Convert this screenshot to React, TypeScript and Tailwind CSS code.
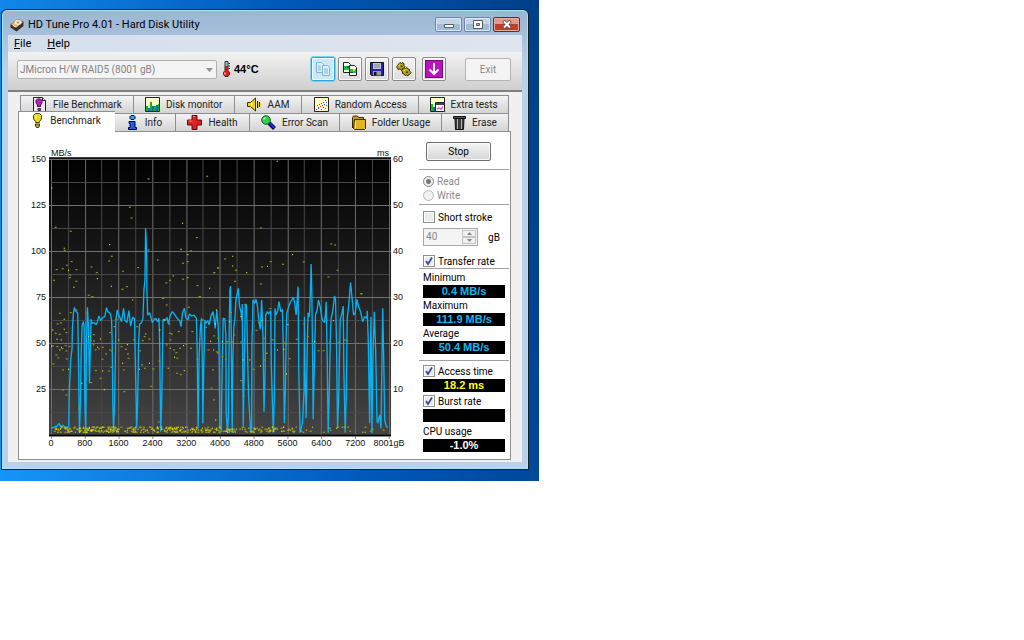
import { useId } from 'react';
import type { ReactNode } from 'react';

type Pt = [number, number];

const parse = (s: string): Pt[] => s.trim().split(/\s+/).map((p) => p.split(',').map(Number) as Pt);

const traceStart =
  '93,415 105,410 112,408 117,400 122,410 128,406 135,412 143,412 146,410 148,300 152,210 156,175 157,115 160,70 163,52 166,62 170,66 173,70 175,200 178,428 181,345 183,200 186,105 190,95 192,110 194,330 197,428 199,160 202,52 205,110 208,280 211,160 213,88 216,100 222,98 228,104 232,95 236,78 242,92 248,82 254,80 259,53 263,65 270,70 274,88 276,150 278,345 280,425 283,345 286,180 287,90 291,60 294,72 298,80 304,95 310,55 314,90 320,98 326,62 331,108 337,82 343,85 344,160 348,345 349,415 352,345 355,160 358,102 364,98 368,85 371,0 374,-30 376,-185 379,-120 380,0 382,75 388,68 396,98 400,90 406,85 412,95 416,85 418,160 421,425 424,345 427,160 428,88 434,92 440,82 444,102 450,75 456,65 464,75 470,85 478,92 482,110 486,70 492,55 496,82 502,90 507,72 514,78 520,75 528,85 530,175 533,415 536,200 540,110 543,85 546,240 547,400 550,230 553,90 556,100 562,92 566,105 572,75 578,65 584,115 589,60 593,110 596,200 598,415';
const traceEnd =
  '28,425 32,425 35,230 38,85 43,86 46,140 47,370 51,428 54,370 56,120 58,0 60,-12 62,120 64,360 65,428 67,200 70,110 73,85 76,30 79,15 83,-5 87,50 91,65 94,90 95,42 98,408 101,230 104,42 108,45 111,200 114,320 118,390 120,425 123,410 124,160 126,90 127,30 132,40 136,28 140,45 145,95 149,118 153,30 157,140 160,365 163,270 165,75 170,65 174,72 180,62 182,230 188,428 191,320 193,55 196,75 201,62 205,35 210,65 215,58 218,180 221,400 224,300 226,160 228,70 234,50 240,35 248,22 252,40 256,75 260,20 262,-10 264,240 268,428 275,400 280,300 281,80 283,250 286,385 290,140 292,68 296,80 299,0 301,-78 303,0 306,250 307,388 311,210 314,75 319,60 323,30 328,50 334,88 341,98 344,70 346,35 349,200 352,428 355,320 359,120 361,85 366,60 371,18 374,30 377,160 380,415 384,300 388,90 393,70 397,48 399,250 403,428 406,320 409,85 413,50 417,0 419,-22 422,10 428,75 433,70 438,28 443,50 449,65 455,95 461,80 468,85 469,62 472,160 476,400 480,80 483,430 486,200 490,65 494,180 498,390 500,400 506,375 510,415 513,200 515,55 518,200 521,390 526,410 531,412';

const dotsUpperLeft = parse(
  '96,144 106,262 151,274 133,325 133,331 154,365 141,376 109,389 127,386 146,391 168,389 150,405 150,413 101,421 168,424 162,442 213,381 229,398 232,416 205,466 216,470 269,314 274,349 266,363 309,394 319,440 306,448 274,439 328,202 333,234 354,383 384,117 384,330 413,360 437,429 448,421 459,408 427,475 481,328 487,250 528,293 511,333 503,344 501,365 487,370 503,413 487,418 530,437 568,445 537,470 580,398 592,384 559,109',
);
const dotsUpperRight = parse(
  '200,64 150,264 43,357 67,349 22,384 10,398 67,378 75,391 72,424 109,398 150,432 153,381 171,379 179,365 216,373 246,344 278,366 360,312 373,315 352,411 379,391 451,461',
);
const dotsLowerLeft = parse(
  '120,70 151,68 168,60 133,88 112,102 122,99 99,120 106,130 118,133 133,118 138,128 110,148 124,150 98,168 111,170 125,172 136,167 147,170 120,180 108,195 138,183 95,169 126,176 114,204 141,207 99,222 128,240 146,238 128,300 138,315 186,280 212,278 240,265 253,299 176,355 200,70 206,140 211,152 220,134 222,153 219,165 225,180 233,172 247,172 235,177 241,147 246,208 226,242 248,243 266,243 272,232 258,192 269,180 274,183 270,128 282,110 288,88 296,150 303,170 316,178 322,164 322,192 324,205 308,220 310,240 311,305 338,30 340,150 350,110 360,183 366,152 372,140 377,132 386,147 364,225 358,238 373,235 398,237 388,220 391,289 416,213 419,120 428,25 438,45 433,90 446,102 448,130 455,132 449,150 438,165 450,175 460,180 467,188 463,202 470,205 478,175 490,167 496,162 474,125 444,235 469,250 480,254 492,242 504,52 515,125 512,175 537,20 530,208 548,90 556,112 563,180 571,154 576,75 580,138 585,102 592,145 414,396 588,60',
);
const dotsLowerRight = parse(
  '10,180 18,186 22,190 36,155 35,200 45,208 8,240 10,330 2,294 16,390 50,155 60,68 58,95 63,155 70,135 92,80 104,44 91,156 98,210 91,272 98,318 118,210 128,238 145,98 154,92 154,106 137,121 150,228 160,145 160,210 169,190 178,56 185,150 201,180 214,65 221,160 220,178 236,206 225,162 232,104 257,148 290,140 312,155 322,182 337,182 368,92 357,156 384,157 403,150 408,152 451,12 228,252 280,102',
);

function idleBand(): Pt[] {
  const out: Pt[] = [];
  let seed = 20114;
  const next = () => {
    seed = (seed * 16807) % 2147483647;
    return seed / 2147483647;
  };
  for (let i = 0; i < 300; i++) out.push([next() * 535, 803 + Math.floor(next() * 6) * 3]);
  for (let i = 0; i < 70; i++) out.push([535 + next() * 200, 803 + Math.floor(next() * 6) * 3]);
  for (let i = 0; i < 20; i++) out.push([735 + next() * 260, 803 + Math.floor(next() * 6) * 3]);
  return out;
}
const band = idleBand();

function Dots({ pts }: { pts: Pt[] }) {
  return (
    <>
      {pts.map(([x, y], i) => (
        <rect key={i} x={x - 2} y={y - 2} width={i % 3 ? 6 : 3} height={3.6} fill={i % 3 ? '#93931c' : '#f0f018'} />
      ))}
    </>
  );
}

function Plot() {
  return (
    <svg viewBox="0 0 1011 828" preserveAspectRatio="none" className="block h-[276px] w-full overflow-visible" role="img" aria-label="Transfer rate and access time">
      <defs>
        <linearGradient id="plotbg" x1="0" y1="0" x2="0" y2="1">
          <stop offset="0" stopColor="#000" />
          <stop offset="1" stopColor="#444" />
        </linearGradient>
      </defs>
      <rect x="-6" y="-5" width="1023" height="837" fill="url(#plotbg)" />
      <rect x="-6" y="-5" width="1023" height="3" fill="#333" />
      {Array.from({ length: 21 }, (_, i) => (
        <rect key={i} x={Math.round(i * 16.83) * 3} y="0" width="3" height="828" fill={i % 2 ? '#474747' : '#6c6c6c'} />
      ))}
      {Array.from({ length: 13 }, (_, i) => (
        <rect key={i} x={i % 2 ? 0 : -6} y={i * 69} width={i % 2 ? 1011 : 1023} height="3" fill={i % 2 ? '#474747' : '#707070'} />
      ))}
      <rect x="-6" y="827" width="1023" height="4" fill="#000" />
      <rect x="-6" y="831" width="1023" height="3" fill="#888" />
      {Array.from({ length: 11 }, (_, i) => (
        <rect key={i} x={i * 101} y="831" width="3" height="8" fill="#777" />
      ))}
      <g fill="none" stroke="#06b2f4" strokeWidth="4" strokeLinejoin="bevel">
        <polyline points={traceStart} transform="translate(-93 393)" />
        <polyline points={traceEnd} transform="translate(477 393)" />
      </g>
      <g transform="translate(-93 -57)"><Dots pts={dotsUpperLeft} /></g>
      <g transform="translate(477 -57)"><Dots pts={dotsUpperRight} /></g>
      <g transform="translate(-93 393)"><Dots pts={dotsLowerLeft} /></g>
      <g transform="translate(477 393)"><Dots pts={dotsLowerRight} /></g>
      {band.map(([x, y], i) => (
        <rect key={i} x={x} y={y} width={i % 2 ? 6 : 3} height={3} fill={i % 2 ? '#b5b512' : '#ffff00'} />
      ))}
    </svg>
  );
}

/* ---------- icons ---------- */

const DriveIcon = () => (
  <svg viewBox="0 0 14 14" className="size-3.5 shrink-0">
    <path d="M.5 6.500 7.500 1l6 2.500V8l-7 5.500-6-4z" fill="#3b3026" />
    <path d="M1 6.500 7.500 1l5.500 3-6.500 5.500z" fill="#e9b878" />
    <ellipse cx="8" cy="4.500" rx="3.400" ry="2.400" fill="#f4e6cf" />
    <circle cx="8" cy="4.500" r=".9" fill="#a76b2c" />
    <path d="m3 7.500 2.500 1.500" stroke="#fff" />
  </svg>
);
const ThermoIcon = () => (
  <svg viewBox="0 0 9 16" className="h-4 w-[9px] shrink-0">
    <path d="M3 .5h3v9l1.500 2v2L6 15.500H3l-1.500-2v-2L3 9.500z" fill="#e81818" stroke="#333" />
    <path d="M3.500 1h2v4h-2z" fill="#77c8c8" />
    <path d="M3 11.500v2" stroke="#fff" />
    <path d="M6.500 2.500H8M6.500 5H8M6.500 7.500H8" stroke="#222" />
  </svg>
);
const Sheets = ({ line, page, mark }: { line: string; page: string; mark?: boolean }) => (
  <svg viewBox="0 0 16 16" className="size-4">
    <path d="M1.500 1.500h5l2 2v8h-7z" fill={page} stroke={line} />
    <path d="M7.500 4.500h5l2 2v8h-7z" fill={page} stroke={line} />
    {mark ? (
      <>
        <path d="M2 5h5v4H2z" fill="#19c83a" />
        <path d="M8 8h6v4H8z" fill="#19c83a" />
        <path d="M3 6h1v1H3zM5 5h2v2H5z" fill="#115566" />
        <path d="M11 8h2v2h-2z" fill="#f2e22a" />
        <path d="M8 11h3v1H8z" fill="#115566" />
      </>
    ) : (
      <path d="M3 5h3M3 7h3M3 9h3M9 8h4M9 10h4M9 12h4" stroke={line} />
    )}
  </svg>
);
const FloppyIcon = () => (
  <svg viewBox="0 0 16 16" className="size-4">
    <path d="M1.500 1.500h13v13h-12l-1-1z" fill="#2525b8" stroke="#111" />
    <path d="M4 2h8v6H4z" fill="#c4c4cc" />
    <path d="M5 4h6M5 6h6" stroke="#888" />
    <path d="M4 10h8v4.500H4z" fill="#999" />
    <path d="M5 11h2.500v3.500H5z" fill="#111" />
  </svg>
);
const GearsIcon = () => (
  <svg viewBox="0 0 16 16" className="size-4">
    <g fill="#b5a418" stroke="#3c3606">
      <path d="m3 2.500 1-1 1.500 1L7 1.500 8 3v1.500l1 1-.5 1.500-2 .5-1 1.500L4 8l-2 .5-.5-1.500-1-1L1.500 4.500z" />
      <path d="m8 6.500 1.500 1 1.500-1 1 1.500 1.500.500L13.500 10l1.500 1.500-1 1.500-1.500.5L12 15l-1.500-1-1.500.5L8 13l-1.500-.5V11l-1-1.500L7 8z" />
    </g>
    <path d="M2.500 5 4 3.500M8 10l1.500-1.500" stroke="#f8f080" />
    <path d="M4.500 4.500h2v1.500h-2zM10 10.500h2V12h-2z" fill="#3c3606" />
  </svg>
);
const DownIcon = () => (
  <svg viewBox="0 0 18 18" className="size-[18px]">
    <rect x=".5" y=".5" width="17" height="17" fill="#b914b9" stroke="#760b78" />
    <path d="M9 3v11M4.500 9.500 9 14l4.500-4.500" fill="none" stroke="#fff" strokeWidth="2" />
  </svg>
);
const box = 'size-[15px] shrink-0';
const FileBenchIcon = () => (
  <svg viewBox="0 0 15 15" className={box}>
    <path d="M1.500.5h9l3 3v11h-12z" fill="#e8e8e8" stroke="#222" />
    <path d="M10.500.5v3h3" fill="#fff" stroke="#222" />
    <path d="M5.500 2h3l1.500 1.500v2L8.500 8v1.500h-3V8L4 5.500v-2z" fill="#c21bcc" stroke="#4d0854" />
    <path d="M6 11.500h2.500v2H6z" fill="#c21bcc" stroke="#333" />
  </svg>
);
const MonitorIcon = () => (
  <svg viewBox="0 0 15 15" className={box}>
    <path d="M.5.5h14v14H.5z" fill="#ffffc8" stroke="#222" />
    <path d="M1 9h2v5H1zM5 5h2v9H5zM9 9h2v5H9zM13 7h1v7h-1z" fill="#12b812" />
    <path d="M3 11h2v3H3zM7 9h2v5H7zM11 8h2v6h-2z" fill="#2060e8" />
  </svg>
);
const SpeakerIcon = () => (
  <svg viewBox="0 0 15 15" className={box}>
    <path d="M.5 5.500h3L8.500 1v13l-5-4.500h-3z" fill="#ead521" stroke="#3b3300" />
    <path d="M4.500 5.500v4" stroke="#fff8a0" />
    <path d="M10.500 4v7M12.500 5v5" fill="none" stroke="#222" />
    <path d="M11.500 4v7M13.500 6v3" fill="none" stroke="#ead521" />
  </svg>
);
const ScatterIcon = () => (
  <svg viewBox="0 0 15 15" className={box}>
    <path d="M.5.5h14v14H.5z" fill="#ffffc4" stroke="#222" />
    <path d="M3 8h1v1H3zM5 7h1v1H5zM8 8h1v1H8zM11 3h1v1h-1zM9 5h1v1H9zM6 9h1v1H6zM12 8h1v1h-1zM7 6h1v1H7zM4 10h1v1H4z" fill="#e83030" />
    <path d="M2 12h1v1H2zM4 11h1v1H4zM7 12h1v1H7zM9 10h1v1H9zM11 11h1v1h-1zM12 5h1v1h-1zM10 7h1v1h-1z" fill="#3050e0" />
  </svg>
);
const ExtraIcon = () => (
  <svg viewBox="0 0 15 15" className={box}>
    <path d="M.5.5h14v14H.5z" fill="#ffffc8" stroke="#222" />
    <path d="M1 7h2v7H1z" fill="#12c012" />
    <path d="M3 10h2v4H3z" fill="#2060e8" />
    <path d="M5.500 5.500h9v9h-9z" fill="#fff" stroke="#222" />
    <path d="M6 6h8v2H6z" fill="#444" />
    <path d="M7 12h1v-1h2v1h2v-2h1" fill="none" stroke="#e020b0" />
  </svg>
);
const BulbIcon = () => (
  <svg viewBox="0 0 9 15" className="h-[15px] w-[9px] shrink-0">
    <path d="M2.500.5h4l2 2V6L6.500 8.500v1h-4v-1L.5 6V2.500z" fill="#e8d824" stroke="#4a4200" />
    <path d="M3 2.500v3" stroke="#fffbc0" />
    <path d="M2.500 11h4v2l-1 1.500h-2l-1-1.500z" fill="#b9ab20" stroke="#333" />
  </svg>
);
const InfoIcon = () => (
  <svg viewBox="0 0 9 15" className="h-[15px] w-[9px] shrink-0">
    <path d="M3 .5h3l1 1v2l-1 1H3l-1-1v-2z" fill="#22a7f0" stroke="#003" />
    <path d="M1 6.500h6v6h1.500v2H.5v-2H2v-4H1z" fill="#1c5fe8" stroke="#003" />
  </svg>
);
const HealthIcon = () => (
  <svg viewBox="0 0 15 15" className={box}>
    <path d="M5 .5h5V5h4.500v5H10v4.500H5V10H.5V5H5z" fill="#dc2323" stroke="#5a0a0a" />
    <path d="M6 1.500h2M1.500 6h4" stroke="#ff8a8a" />
  </svg>
);
const LensIcon = () => (
  <svg viewBox="0 0 15 15" className={box}>
    <path d="m8 8 5.500 5.500" stroke="#000050" strokeWidth="4" />
    <path d="m8.500 8 5 5" stroke="#2233d8" strokeWidth="2" />
    <circle cx="5" cy="5" r="4.300" fill="#2fd04a" stroke="#135c20" />
    <path d="M2.500 4.500 4.500 2.500" stroke="#c8ffd0" strokeWidth="1.500" />
  </svg>
);
const FolderIcon = () => (
  <svg viewBox="0 0 15 15" className={box}>
    <path d="M1.500 13V2.500l1-1.500h4l1 1.500h5V5" fill="#c99a16" stroke="#3c2c00" />
    <path d="M3.500 4.500h11v9l-1 1h-10l-1-1z" fill="#e3b422" stroke="#3c2c00" />
    <path d="M4.500 6v7" stroke="#fbe48a" />
  </svg>
);
const TrashIcon = () => (
  <svg viewBox="0 0 13 15" className="h-[15px] w-[13px] shrink-0">
    <path d="M.5 1.500h12v2H.5z" fill="#555" stroke="#111" />
    <path d="M2 3.500h9l-.5 11h-8z" fill="#3c3c3c" stroke="#111" />
    <path d="M4.500 4v10M8.500 4v10" stroke="#b0b0b0" />
  </svg>
);

/* ---------- controls ---------- */

function Tab({ className, icon, label, active }: { className: string; icon: ReactNode; label: string; active?: boolean }) {
  return (
    <button
      role="tab"
      aria-selected={!!active}
      className={
        (active
          ? 'relative -mt-0.5 -mb-px h-[21px] bg-white border-t border-l border-[#8c8e94] pb-1 '
          : 'h-[18px] border-t border-r border-[#8c8e94] bg-linear-to-b from-[#f3f3f3] to-[#d4d4d4] ') +
        'flex min-w-0 grow items-center justify-center whitespace-nowrap ' +
        className
      }
    >
      {icon}
      {label}
    </button>
  );
}

function ToolButton({ label, className, children }: { label: string; className?: string; children: ReactNode }) {
  return (
    <button
      aria-label={label}
      className={'flex size-6 items-center justify-center rounded-xs border shadow-[inset_0_0_0_1px_#fff] ' + (className ?? 'border-[#8a8a8a] bg-linear-to-b from-[#f4f4f4] to-[#dcdcdc]')}
    >
      {children}
    </button>
  );
}

function Check({ label, checked }: { label: string; checked?: boolean }) {
  return (
    <label className="flex h-3.5 items-center gap-[3px] pl-1">
      <span className="relative flex size-3">
        <input type="checkbox" defaultChecked={checked} className="peer size-3 appearance-none border border-[#8e8f8f] bg-[#e9ecef] shadow-[inset_0_0_0_1px_#fff]" />
        <svg viewBox="0 0 12 12" className="pointer-events-none absolute inset-0 hidden size-3 peer-checked:block">
          <path d="m3 6 2 3 4-6.500" fill="none" stroke="#3d4f96" strokeWidth="1.800" />
        </svg>
      </span>
      {label}
    </label>
  );
}

function Mode({ label, checked }: { label: string; checked?: boolean }) {
  return (
    <label className="flex h-3.5 items-center gap-[3px] pl-1 text-[#8a8a8a]">
      <input
        type="radio"
        name="mode"
        disabled
        defaultChecked={checked}
        className="size-[11px] appearance-none rounded-full border border-[#b8b8b8] bg-[#f0f0f0] checked:border-[#888] checked:bg-[radial-gradient(circle,#777_0_2px,#eee_3px)]"
      />
      {label}
    </label>
  );
}

function Value({ tone, children }: { tone: string; children?: ReactNode }) {
  return (
    <output className={"my-px mr-1 ml-1 flex h-[13px] items-center justify-center bg-black font-['Liberation_Sans'] text-[11px] leading-[13px] font-bold " + tone}>
      {children}
    </output>
  );
}

const Rule = ({ className }: { className: string }) => <hr className={'border-[#a0a0a0] ' + className} />;
const Caption = ({ children }: { children: ReactNode }) => <div className="h-[13px] pl-1 leading-[13px]">{children}</div>;

const winBtn = 'flex h-[15px] w-[27px] items-center justify-center rounded-xs border border-[#6f87a5] bg-linear-to-b from-[#c3d4e8] from-45% to-[#a2bad5] to-50% shadow-[inset_0_0_0_1px_#dbe7f3]';

export default function App() {
  const strokeId = useId();
  return (
    <div className="min-h-screen bg-white font-['Roboto','Liberation_Sans',sans-serif] text-[10px] leading-[13px] text-black">
      <main className="w-[52.64%] min-w-[530px] bg-[linear-gradient(80deg,#1595f8,#0058b8_60%,#003f88)] pt-[9px] pr-[10px] pb-[11px] pl-px">
        <section className="rounded-t-md border border-[#16202c] bg-linear-to-b from-[#9ab5d2] to-[#b9d1ea] to-[60px] px-[6px] pb-[7px] shadow-[inset_0_0_0_1px_#a8e4f4]">
          <header className="flex h-[25px] items-center gap-1 pt-1 pl-0.5">
            <DriveIcon />
            <h1 className="grow text-[11px] whitespace-nowrap">HD Tune Pro 4.01 - Hard Disk Utility</h1>
            <div className="flex gap-0.5 pr-0.5">
              <button aria-label="Minimize" className={winBtn}>
                <svg viewBox="0 0 12 9" className="h-[9px] w-3"><path d="M1.500 4.500h9v3h-9z" fill="#fff" stroke="#555e6a" /></svg>
              </button>
              <button aria-label="Maximize" className={winBtn}>
                <svg viewBox="0 0 12 9" className="h-[9px] w-3"><path d="M1.500.5h9v8h-9z" fill="#fff" stroke="#555e6a" /><path d="M4.500 3.500h3v2h-3z" fill="#9bb2cc" stroke="#555e6a" /></svg>
              </button>
              <button aria-label="Close" className="flex h-[15px] w-[27px] items-center justify-center rounded-xs border border-[#6d2a24] bg-linear-to-b from-[#dc9a8c] from-45% to-[#bd4028] to-50% shadow-[inset_0_0_0_1px_#e4aba1]">
                <svg viewBox="0 0 12 9" className="h-[9px] w-3"><path d="m2.500 1 7 7M9.500 1l-7 7" stroke="#5b4b4b" strokeWidth="3.600" /><path d="m3 1.500 6 6M9 1.500l-6 6" stroke="#fff" strokeWidth="2" /></svg>
              </button>
            </div>
          </header>

          <nav className="flex h-[17px] items-center gap-4 bg-linear-to-r from-[#d5dfec] to-[#dfe5ee] pl-1.5 text-[11px]">
            <button><u>F</u>ile</button>
            <button><u>H</u>elp</button>
          </nav>

          <div className="flex h-10 items-center border-b-2 border-[#808080] bg-linear-to-b from-[#f2f2f2] to-[#cfcfcf] pr-[11px] pb-1 pl-[9px]">
            <div className="relative w-[200px]">
              <select aria-label="Drive" disabled className="block h-[19px] w-full appearance-none rounded-xs border border-[#b0b0b0] bg-[#f4f4f4] pl-0.5 text-[10px] leading-[17px] text-[#838383] opacity-100">
                <option>JMicron H/W RAID5 (8001 gB)</option>
              </select>
              <svg viewBox="0 0 7 4" className="pointer-events-none absolute top-2 right-1 h-1 w-[7px]"><path d="M0 0h7L3.500 4z" fill="#909090" /></svg>
            </div>
            <div className="ml-[5px] flex items-center gap-[3px] font-['Liberation_Sans'] text-[11px] font-bold">
              <ThermoIcon />
              44°C
            </div>
            <div className="ml-auto flex items-center gap-[3px]">
              <ToolButton label="Copy text" className="border-[#2ca5d8] bg-[#c9e9f8] outline outline-[#7fd0f0]">
                <Sheets line="#7fb2d6" page="#e2f3fc" />
              </ToolButton>
              <ToolButton label="Copy image"><Sheets line="#222" page="#fff" mark /></ToolButton>
              <ToolButton label="Save"><FloppyIcon /></ToolButton>
              <ToolButton label="Options"><GearsIcon /></ToolButton>
            </div>
            <div className="ml-1.5 flex items-center gap-[19px]">
              <ToolButton label="Minimize to tray"><DownIcon /></ToolButton>
              <button disabled className="h-[23px] w-[46px] rounded-xs border border-[#b4b4b4] bg-[#f4f4f4] text-[#8a8a8a]">Exit</button>
            </div>
          </div>

          <div className="bg-[#f0f0f0] pt-[3px] pr-[11px] pb-0.5 pl-2.5">
            <div role="tablist" className="text-[#222]">
              <div className="ml-0.5 mr-0.5 flex border-l border-[#8c8e94]">
                <Tab className="basis-[113px] gap-1.5" icon={<FileBenchIcon />} label="File Benchmark" />
                <Tab className="basis-[101px] gap-1.5" icon={<MonitorIcon />} label="Disk monitor" />
                <Tab className="basis-[68px] gap-1.5" icon={<SpeakerIcon />} label="AAM" />
                <Tab className="basis-[117px] gap-1.5" icon={<ScatterIcon />} label="Random Access" />
                <Tab className="basis-[90px] gap-1.5" icon={<ExtraIcon />} label="Extra tests" />
              </div>
              <div className="mr-0.5 flex">
                <Tab className="basis-[97px] gap-2" icon={<BulbIcon />} label="Benchmark" active />
                <Tab className="basis-[61px] gap-2" icon={<InfoIcon />} label="Info" />
                <Tab className="basis-[74px] gap-1.5" icon={<HealthIcon />} label="Health" />
                <Tab className="basis-[90px] gap-1.5" icon={<LensIcon />} label="Error Scan" />
                <Tab className="basis-[102px] gap-1.5" icon={<FolderIcon />} label="Folder Usage" />
                <Tab className="basis-[67px] gap-1.5" icon={<TrashIcon />} label="Erase" />
              </div>
            </div>

            <div role="tabpanel" className="flex border border-[#8c8e94] bg-white pb-1.5">
              <div className="grid grow grid-cols-[32px_1fr_26px] content-start pt-4 font-['Liberation_Sans'] text-[9px] leading-3 text-[#111]">
                <div />
                <div className="flex justify-between pb-px leading-[10px]"><span>MB/s</span><span>ms</span></div>
                <div />
                <div className="-my-1.5 flex flex-col justify-between pr-[5px] text-right">
                  {['150', '125', '100', '75', '50', '25', '\u00a0'].map((t, i) => <span key={i}>{t}</span>)}
                </div>
                <Plot />
                <div className="-my-1.5 flex flex-col justify-between pl-1">
                  {['60', '50', '40', '30', '20', '10', '\u00a0'].map((t, i) => <span key={i}>{t}</span>)}
                </div>
                <div />
                <div className="flex justify-between pt-0.5">
                  {['0', '800', '1600', '2400', '3200', '4000', '4800', '5600', '6400', '7200', '8001gB'].map((t) => (
                    <span key={t} className="flex w-0 justify-center whitespace-nowrap">{t}</span>
                  ))}
                </div>
                <div />
              </div>

              <aside className="mr-px ml-1 w-[90px] shrink-0 pt-2.5">
                <button className="ml-[7px] flex h-[19px] w-[65px] items-center justify-center rounded-xs border border-[#707070] bg-linear-to-b from-[#f4f4f4] to-[#d6d6d6] shadow-[inset_0_0_0_1px_#fafafa]">Stop</button>
                <Rule className="mt-2 mb-1" />
                <Mode label="Read" checked />
                <Mode label="Write" />
                <Rule className="mt-0.5 mb-[5px]" />
                <Check label="Short stroke" />
                <div className="mt-1 mb-2 flex items-center gap-2.5 pl-1">
                  <div className="flex h-[18px] w-[55px] items-center border border-[#a8a8a8] bg-[#f4f4f4] px-px">
                    <input id={strokeId} disabled defaultValue="40" className="h-4 w-0 grow px-px text-[10px] leading-4 text-[#8a8a8a]" />
                    <div className="flex flex-col">
                      {['M0 4h5L2.500 1z', 'M0 1h5L2.500 4z'].map((d, i) => (
                        <button key={i} disabled aria-label={i ? 'Decrease' : 'Increase'} className="flex h-[7px] w-3.5 items-center justify-center border border-[#c4c4c4] bg-[#f0f0f0]">
                          <svg viewBox="0 0 5 5" className="size-[5px]"><path d={d} fill="#888" /></svg>
                        </button>
                      ))}
                    </div>
                  </div>
                  <label htmlFor={strokeId}>gB</label>
                </div>
                <Check label="Transfer rate" checked />
                <Rule className="mb-0.5" />
                <Caption>Minimum</Caption>
                <Value tone="text-[#18b4f0]">0.4 MB/s</Value>
                <Caption>Maximum</Caption>
                <Value tone="text-[#18b4f0]">111.9 MB/s</Value>
                <Caption>Average</Caption>
                <Value tone="text-[#18b4f0]">50.4 MB/s</Value>
                <Rule className="mt-1.5 mb-[3px]" />
                <Check label="Access time" checked />
                <Value tone="text-[#ffff20]">18.2 ms</Value>
                <div className="pt-px"><Check label="Burst rate" checked /></div>
                <Value tone="text-white" />
                <div className="pt-0.5"><Caption>CPU usage</Caption></div>
                <Value tone="text-white">-1.0%</Value>
              </aside>
            </div>
          </div>
        </section>
      </main>
    </div>
  );
}
